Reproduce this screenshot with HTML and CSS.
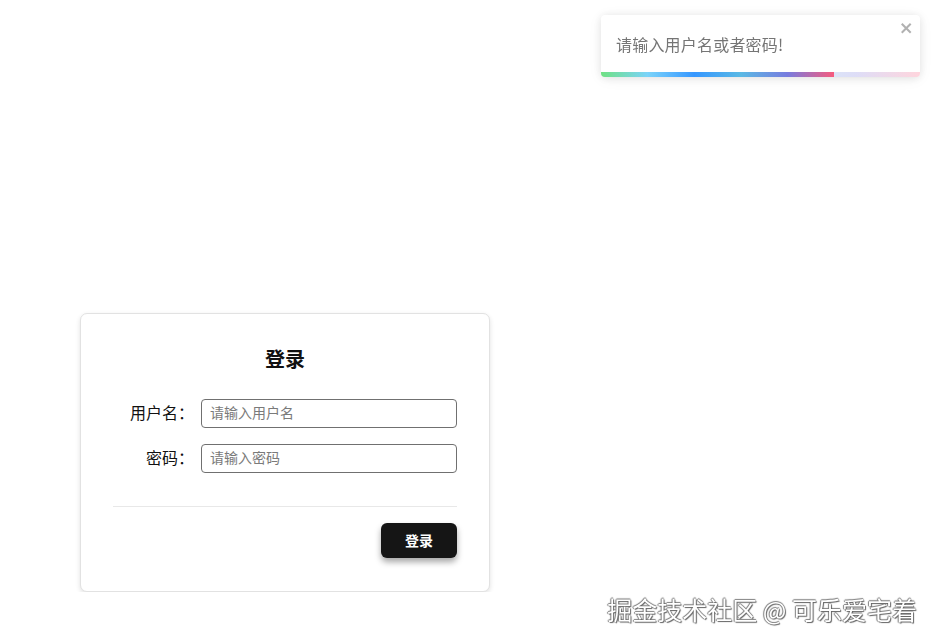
FILE: index.html
```html
<!DOCTYPE html>
<html lang="zh-CN">
<head>
<meta charset="utf-8">
<title>登录</title>
<link rel="stylesheet" href="styles.css">
</head>
<body>
<main class="page">
  <section class="card">
    <h1 class="card-title">登录</h1>
    <form class="form">
      <div class="row">
        <label class="label" for="u">用户名：</label>
        <input class="input" id="u" type="text" placeholder="请输入用户名">
      </div>
      <div class="row">
        <label class="label" for="p">密码：</label>
        <input class="input" id="p" type="password" placeholder="请输入密码">
      </div>
    </form>
    <hr class="divider">
    <div class="actions">
      <button class="btn" type="button">登录</button>
    </div>
  </section>
</main>

<div class="toast">
  <div class="toast-body">请输入用户名或者密码!</div>
  <button class="toast-close" type="button" aria-label="close">
    <svg viewBox="0 0 14 16" width="14" height="16"><path fill="currentColor" d="M7.71 8.23l3.75 3.75-1.48 1.48-3.75-3.75-3.75 3.75L1 11.98l3.75-3.75L1 4.48 2.48 3l3.75 3.75L9.98 3l1.48 1.48-3.75 3.75z"/></svg>
  </button>
  <div class="progress-bg"></div>
  <div class="progress"></div>
</div>

<div class="watermark">掘金技术社区 @ 可乐爱宅着</div>
</body>
</html>
```

FILE: styles.css
```css
html, body {
  margin: 0;
  padding: 0;
  background: #fff;
  font-family: "Noto Sans CJK SC", "Noto Sans", sans-serif;
  color: #111;
}

.page {
  padding: 313px 0 0 80px;
}

.card {
  width: 344px;
  padding: 31px 32px 33px;
  border: 1px solid #e2e2e2;
  border-radius: 7px;
  box-shadow: 0 2px 5px rgba(0, 0, 0, 0.12);
  background: #fff;
}

.card-title {
  margin: 0 0 26px;
  text-align: center;
  font-size: 20px;
  line-height: 28px;
  font-weight: 700;
  color: #111;
}

.form {
  display: flex;
  flex-direction: column;
  gap: 16px;
}

.row {
  display: flex;
  align-items: center;
}

.label {
  width: 81px;
  margin-right: 7px;
  padding-bottom: 4px;
  text-align: right;
  font-size: 16px;
  line-height: 22px;
  color: #111;
}

.input {
  flex: 1;
  box-sizing: border-box;
  height: 29px;
  padding: 0 8px 3px;
  border: 1px solid #707070;
  border-radius: 4px;
  font-family: "Noto Sans CJK SC", "Noto Sans", sans-serif;
  font-size: 14px;
  color: #111;
  outline: none;
}

.input::placeholder {
  color: #7a7a7a;
}

.divider {
  margin: 33px 0 16px;
  border: 0;
  border-top: 1px solid #e8e8e8;
}

.actions {
  display: flex;
  justify-content: flex-end;
}

.btn {
  width: 76px;
  height: 35px;
  padding: 0 0 2px;
  border: 0;
  border-radius: 6px;
  background: #151515;
  color: #fff;
  font-family: "Noto Sans CJK SC", "Noto Sans", sans-serif;
  font-size: 14px;
  font-weight: 700;
  box-shadow: 0 4px 6px rgba(0, 0, 0, 0.35);
}

/* toast */
.toast {
  position: fixed;
  top: 15px;
  right: 17px;
  width: 319px;
  min-height: 62px;
  box-sizing: border-box;
  padding: 8px 6px 13px 15px;
  display: flex;
  align-items: center;
  background: #fff;
  border-radius: 4px;
  box-shadow: 0 1px 10px rgba(0, 0, 0, 0.1), 0 2px 15px rgba(0, 0, 0, 0.05);
  overflow: hidden;
}

.toast-body {
  flex: 1;
  font-size: 16px;
  line-height: 22px;
  color: #757575;
  letter-spacing: 0.2px;
}

.toast-close {
  align-self: flex-start;
  margin-top: -3px;
  padding: 0;
  border: 0;
  background: none;
  color: #000;
  opacity: 0.3;
}

.progress-bg,
.progress {
  position: absolute;
  left: 0;
  bottom: 0;
  height: 5px;
  background: linear-gradient(to right, #4cd964, #5ac8fa, #007aff, #34aadc, #5856d6, #ff2d55);
}

.progress-bg {
  width: 100%;
  opacity: 0.2;
}

.progress {
  width: 73%;
  opacity: 0.75;
}

/* watermark */
.watermark {
  position: fixed;
  right: 20px;
  bottom: 20px;
  font-family: "Noto Sans CJK SC", sans-serif;
  font-size: 25px;
  line-height: 30px;
  color: #fff;
  text-shadow: 0 0 1px #555, 1px 1px 1px #666, -1px 0 1px #888, 0 -1px 1px #888;
}
```
